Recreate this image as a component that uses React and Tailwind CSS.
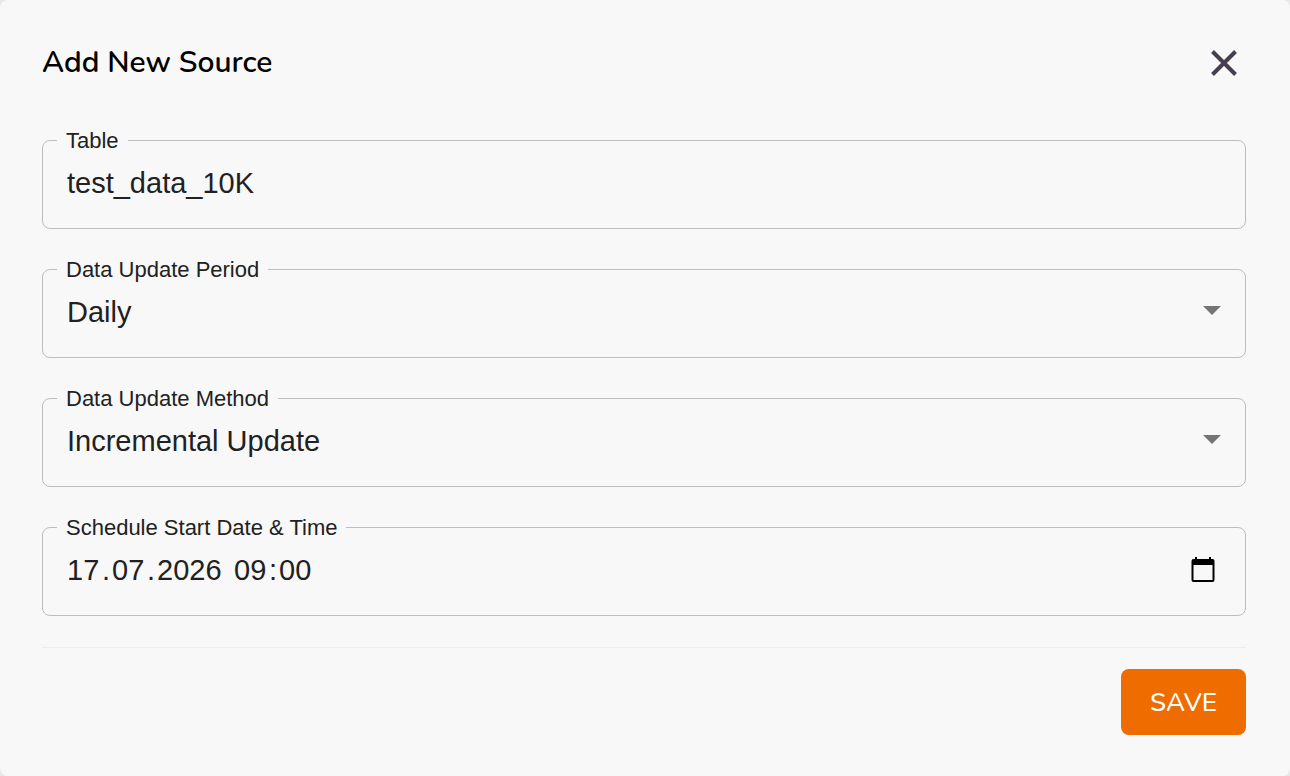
import React from "react";

const Field = ({ id, label, children }) => {
  return (
    <fieldset className="h-[99px] min-w-0 rounded-lg border border-[#bdbdbd] pl-[14px] pr-6">
      <legend className="h-[21px] px-[9px] text-[22px] leading-[21px]">
        <label htmlFor={id}>{label}</label>
      </legend>
      <div className="flex h-16 items-center pl-[10px]">{children}</div>
    </fieldset>
  );
};

const SelectField = ({ id, label, value, options }) => {
  return (
    <Field id={id} label={label}>
      <select
        id={id}
        defaultValue={value}
        className="h-10 min-w-0 flex-1 appearance-none bg-transparent text-[29px] leading-10 outline-none"
      >
        {options.map((option) => (
          <option key={option}>{option}</option>
        ))}
      </select>
      <svg
        className="pointer-events-none mb-1 h-[9px] w-[18px] shrink-0"
        viewBox="0 0 18 9"
        fill="#757575"
      >
        <path d="M0 0h18l-9 9z" />
      </svg>
    </Field>
  );
};

// Each part of the date is edited on its own, followed by its separator
const dateParts = [
  { name: "Day", value: "17", separator: "." },
  { name: "Month", value: "07", separator: "." },
  { name: "Year", value: "2026", separator: "" },
  { name: "Hour", value: "09", separator: ":" },
  { name: "Minute", value: "00" },
];

const DateTimeField = ({ id, label }) => {
  return (
    <Field id={id} label={label}>
      <div className="flex flex-1 items-center text-[29px] leading-10">
        {dateParts.map((part, index) => (
          <React.Fragment key={part.name}>
            <input
              id={index === 0 ? id : undefined}
              type="text"
              inputMode="numeric"
              aria-label={part.name}
              defaultValue={part.value}
              className={
                part.name === "Year"
                  ? "h-10 w-[65px] bg-transparent outline-none"
                  : "h-10 w-[33px] bg-transparent outline-none"
              }
            />
            {part.separator !== undefined && (
              <span className="w-3 text-center">{part.separator}</span>
            )}
          </React.Fragment>
        ))}
      </div>
      <button type="button" aria-label="Open calendar" className="mr-[6px]">
        <svg className="h-[26px] w-6" viewBox="0 0 24 26">
          <path
            fill="#000"
            fillRule="evenodd"
            d="M4 0h2v2h12V0h2v2h1.500a2 2 0 0 1 2 2v19a2 2 0 0 1-2 2h-19a2 2 0 0 1-2-2V4a2 2 0 0 1 2-2H4zM2.500 8v15h19V8z"
          />
        </svg>
      </button>
    </Field>
  );
};

const App = () => {
  return (
    <div className="bg-[#e8e8e8] font-['Liberation_Sans',Arial,sans-serif] text-[#212121]">
      <form
        className="rounded-lg bg-[#f8f8f8] pb-[41px] pl-[42px] pr-11 pt-10"
        onSubmit={(e) => e.preventDefault()}
      >
        <div className="flex h-[46px] items-center justify-between">
          <h2 className="font-[Nunito,Lato,sans-serif] text-[30px] font-semibold leading-10 text-black">
            Add New Source
          </h2>
          <button type="button" aria-label="Close" className="mr-[9px]">
            <svg
              className="h-[26px] w-[26px]"
              viewBox="0 0 26 26"
              stroke="#463f50"
              strokeWidth="4"
            >
              <path d="M1.500 1.500l23 23M24.500 1.500l-23 23" />
            </svg>
          </button>
        </div>

        <div className="mt-11 flex flex-col gap-[30px]">
          <Field id="table" label="Table">
            <input
              id="table"
              type="text"
              defaultValue="test_data_10K"
              className="h-10 min-w-0 flex-1 bg-transparent text-[29px] leading-10 outline-none"
            />
          </Field>
          <SelectField
            id="period"
            label="Data Update Period"
            value="Daily"
            options={["Daily", "Weekly", "Monthly"]}
          />
          <SelectField
            id="method"
            label="Data Update Method"
            value="Incremental Update"
            options={["Incremental Update", "Full Update"]}
          />
          <DateTimeField id="start" label="Schedule Start Date & Time" />
        </div>

        <hr className="mt-[31px] border-[#ececec]" />

        <div className="mt-[21px] flex justify-end">
          <button
            type="submit"
            className="h-[66px] w-[125px] rounded-lg bg-[#ee6c00] font-[Nunito,Lato,sans-serif] text-[26px] font-medium text-white"
          >
            SAVE
          </button>
        </div>
      </form>
    </div>
  );
};

export default App;
